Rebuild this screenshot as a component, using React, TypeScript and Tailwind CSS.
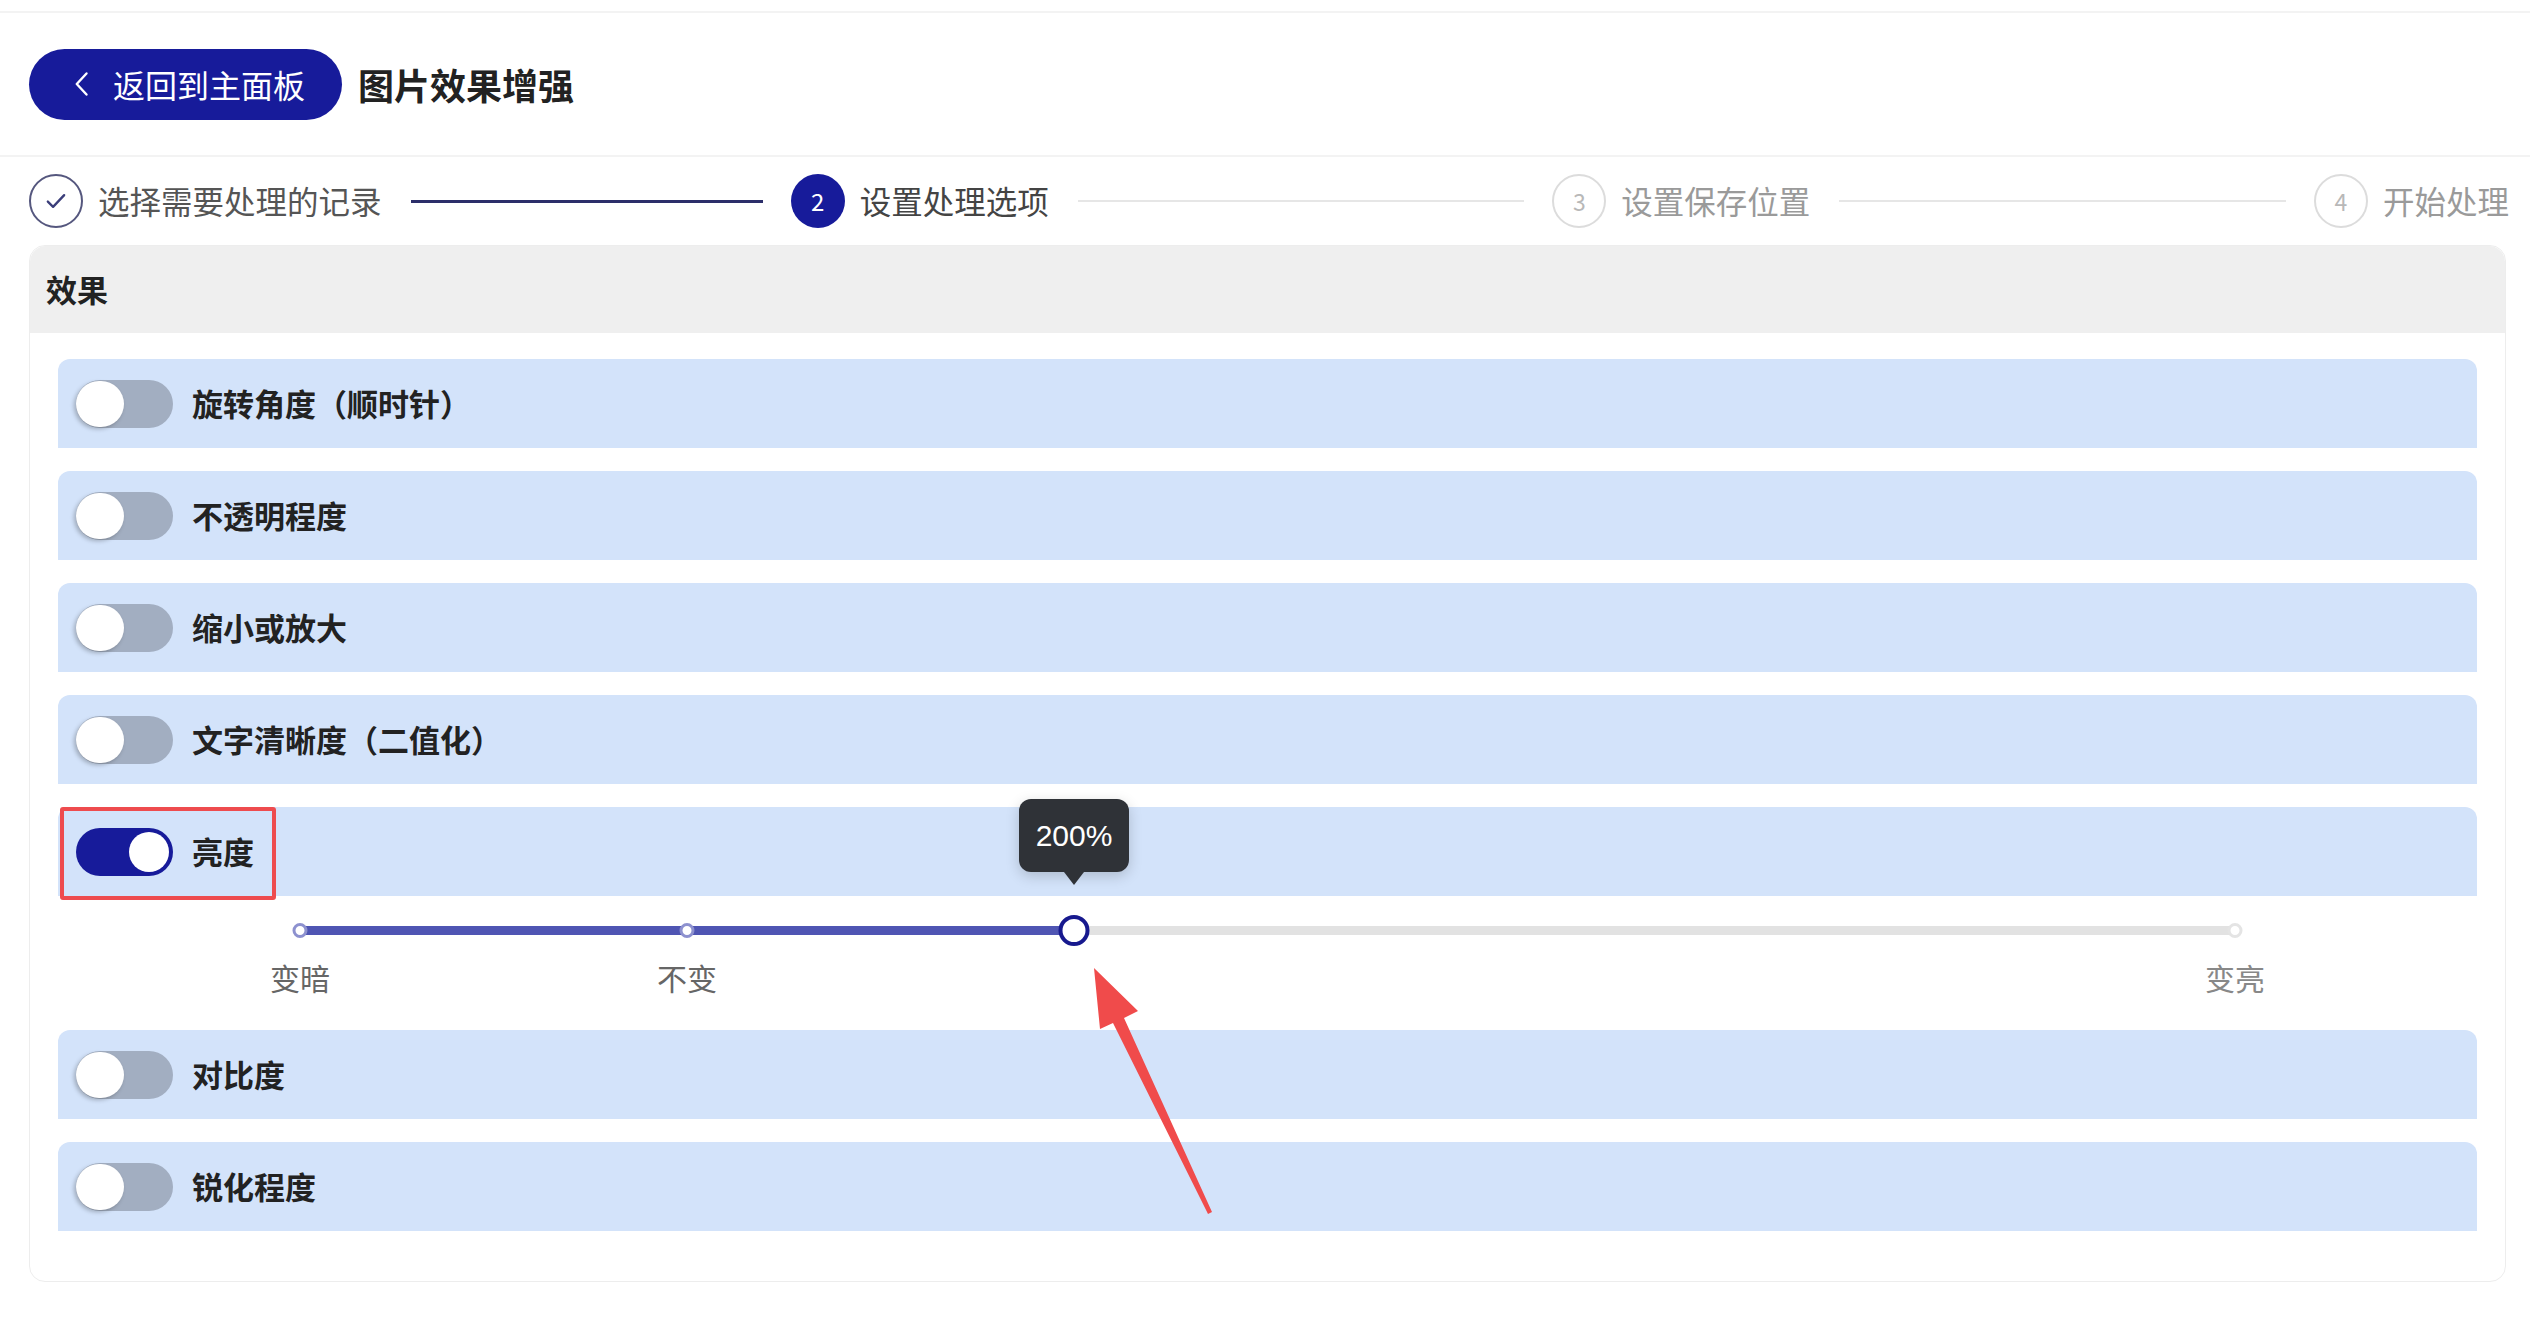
import React from 'react'

const FONT = "font-['Noto_Sans_CJK_SC','Noto_Sans',sans-serif]"

function Toggle({ on }: { on?: boolean }) {
  if (on) {
    return (
      <div className="relative h-[48px] w-[97px] rounded-full bg-[#171b9a]">
        <div className="absolute right-[4px] top-[4px] h-[40px] w-[40px] rounded-full bg-white" />
      </div>
    )
  }
  return (
    <div className="relative h-[48px] w-[97px] rounded-full bg-[#a2aec1]">
      <div className="absolute left-0 top-[1px] h-[46px] w-[48px] rounded-full bg-white shadow-[-2px_2px_4px_rgba(0,0,0,0.25)]" />
    </div>
  )
}

function EffectRow({ label, on, marked }: { label: string; on?: boolean; marked?: boolean }) {
  return (
    <div className="relative h-[89px] rounded-t-[12px] bg-[#d3e3fa] flex items-center pl-[18px]">
      <Toggle on={on} />
      <span className="ml-[19px] text-[31px] font-bold text-[#222] whitespace-nowrap">{label}</span>
      {marked && (
        <div className="absolute left-[2px] top-0 h-[93px] w-[216px] rounded-[3px] border-[4px] border-[#ee4b4e]" />
      )}
    </div>
  )
}

function Step({
  n,
  label,
  state,
  line,
}: {
  n: number
  label: string
  state: 'done' | 'active' | 'todo'
  line?: 'dark' | 'light'
}) {
  return (
    <div className={`flex items-center ${line ? 'flex-1' : ''}`}>
      {state === 'done' && (
        <div className="h-[54px] w-[54px] rounded-full border-[2px] border-[#55577e] flex items-center justify-center">
          <svg width="28" height="28" viewBox="0 0 24 24" fill="none" stroke="#3b3e7a" strokeWidth="2" strokeLinecap="round" strokeLinejoin="round">
            <path d="M5 12.5l4.5 4.5L19 7" />
          </svg>
        </div>
      )}
      {state === 'active' && (
        <div className="h-[54px] w-[54px] rounded-full bg-[#171b9a] flex items-center justify-center text-white text-[24px]">
          {n}
        </div>
      )}
      {state === 'todo' && (
        <div className="h-[54px] w-[54px] rounded-full border-[2px] border-[#dcdcdc] flex items-center justify-center text-[#b8b8b8] text-[23px]">
          {n}
        </div>
      )}
      <span
        className={`ml-[15px] text-[31.5px] whitespace-nowrap ${
          state === 'todo' ? 'text-[#9a9a9a]' : state === 'active' ? 'text-[#444]' : 'text-[#555]'
        }`}
      >
        {label}
      </span>
      {line && (
        <div
          className={`flex-1 ml-[29px] mr-[28px] ${
            line === 'dark' ? 'h-[3px] bg-[#2c2e6a]' : 'h-[2px] bg-[#e6e6e6]'
          }`}
        />
      )}
    </div>
  )
}

function BrightnessSlider() {
  return (
    <div className="h-[88px] px-[242px]">
      <div className="relative h-full">
        {/* track */}
        <div className="absolute left-0 right-0 top-[7px] h-[9px] rounded-full bg-[#e2e2e2]" />
        <div className="absolute left-0 w-[40%] top-[7px] h-[9px] rounded-full bg-[#4f55b3]" />
        {/* marks */}
        <div className="absolute left-0 top-[4px] h-[15px] w-[15px] -translate-x-1/2 rounded-full border-[3px] border-[#8d91cf] bg-white" />
        <div className="absolute left-[20%] top-[4px] h-[15px] w-[15px] -translate-x-1/2 rounded-full border-[3px] border-[#8d91cf] bg-white" />
        <div className="absolute left-full top-[4px] h-[15px] w-[15px] -translate-x-1/2 rounded-full border-[3px] border-[#e4e4e4] bg-white" />
        {/* thumb */}
        <div className="absolute left-[40%] top-[-4px] h-[31px] w-[31px] -translate-x-1/2 rounded-full border-[4px] border-[#17198e] bg-white" />
        {/* tooltip */}
        <div className="absolute left-[40%] top-[-120px] -translate-x-1/2 flex flex-col items-center">
          <div className="h-[73px] w-[110px] rounded-[12px] bg-[#2f3237] text-white text-[30px] flex items-center justify-center shadow-[0_4px_14px_rgba(0,0,0,0.18)] font-['Liberation_Sans',sans-serif]">
            200%
          </div>
          <div className="h-0 w-0 border-x-[10px] border-x-transparent border-t-[13px] border-t-[#2f3237]" />
        </div>
        {/* labels */}
        <span className="absolute left-0 top-[36px] -translate-x-1/2 whitespace-nowrap text-[30px] text-[#666]">变暗</span>
        <span className="absolute left-[20%] top-[36px] -translate-x-1/2 whitespace-nowrap text-[30px] text-[#666]">不变</span>
        <span className="absolute left-full top-[36px] -translate-x-1/2 whitespace-nowrap text-[30px] text-[#888]">变亮</span>
      </div>
    </div>
  )
}

export default function App() {
  return (
    <div className={`relative w-[2530px] h-[1320px] bg-white ${FONT}`}>
      <div className="h-[11px]" />

      {/* Header */}
      <header className="h-[146px] border-t-[2px] border-b-[2px] border-[#f3f3f3] flex items-center pl-[29px] gap-[16px]">
        <button className="h-[71px] w-[313px] rounded-full bg-[#171b9a] flex items-center pl-[42px] text-white text-[32px]">
          <svg width="22" height="30" viewBox="0 0 12 20" fill="none" stroke="white" strokeWidth="1.6" strokeLinecap="round" strokeLinejoin="round">
            <path d="M9 3L2.5 10L9 17" />
          </svg>
          <span className="ml-[20px]">返回到主面板</span>
        </button>
        <h1 className="text-[36px] font-bold text-[#222]">图片效果增强</h1>
      </header>

      {/* Steps */}
      <div className="h-[88px] ml-[29px] w-[2480px] flex items-center">
        <Step n={1} label="选择需要处理的记录" state="done" line="dark" />
        <Step n={2} label="设置处理选项" state="active" line="light" />
        <Step n={3} label="设置保存位置" state="todo" line="light" />
        <Step n={4} label="开始处理" state="todo" />
      </div>

      {/* Effects card */}
      <div className="ml-[29px] w-[2477px] rounded-[16px] border border-[#ededed] bg-white">
        <div className="h-[87px] rounded-t-[16px] bg-[#efefef] flex items-center pl-[16px] text-[31px] font-bold text-[#222]">
          效果
        </div>
        <div className="px-[28px] pt-[26px] pb-[50px] flex flex-col gap-[23px]">
          <EffectRow label="旋转角度（顺时针）" />
          <EffectRow label="不透明程度" />
          <EffectRow label="缩小或放大" />
          <EffectRow label="文字清晰度（二值化）" />
          <EffectRow label="亮度" on marked />
          <BrightnessSlider />
          <EffectRow label="对比度" />
          <EffectRow label="锐化程度" />
        </div>
      </div>

      {/* annotation arrow */}
      <svg className="absolute inset-0 pointer-events-none" width="2530" height="1320">
        <polygon
          fill="#f04b4b"
          points="1094,968 1138,1011 1124,1018 1212,1212 1208,1214 1113,1023 1100,1029"
        />
      </svg>
    </div>
  )
}
